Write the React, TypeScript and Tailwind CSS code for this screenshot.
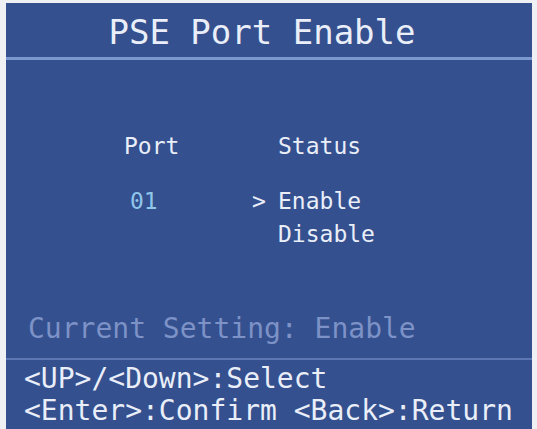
const mono = "font-['DejaVu_Sans_Mono','Liberation_Mono',monospace]";

export default function App() {
  return (
    <div className={`h-[429px] w-[537px] bg-[#eef0f3] pl-[6px] pr-[5px] pt-[3px] ${mono}`}>
      <div className="flex h-full flex-col bg-[#34508f] text-[#e9eef8]">
        {/* title bar */}
        <div className="flex h-[54px] items-center justify-center pt-[4px] pr-[14px] text-[34px] leading-none">
          PSE Port Enable
        </div>
        <div className="h-[3px] bg-[#7d97cf]" />

        {/* port list */}
        <div className="flex flex-1 flex-col">
          <div className="mt-[75px] flex text-[23px] leading-none">
            <div className="w-[272px] pl-[118px]">Port</div>
            <div>Status</div>
          </div>
          <div className="mt-[32px] flex text-[23px] leading-none">
            <div className="w-[246px] pl-[124px] text-[#8fc6ea]">01</div>
            <div className="flex flex-col gap-[10px]">
              <div>
                <span className="inline-block w-[26px]">&gt;</span>Enable
              </div>
              <div className="pl-[26px]">Disable</div>
            </div>
          </div>
          <div className="mt-auto mb-[15px] pl-[22px] text-[28px] leading-none text-[#7d92c6]">
            Current Setting: Enable
          </div>
        </div>

        <div className="h-[2px] bg-[#5c77b3]" />
        {/* key help */}
        <div className="flex h-[69px] flex-col justify-center gap-[4px] pl-[18px] text-[28px] leading-none">
          <div>&lt;UP&gt;/&lt;Down&gt;:Select</div>
          <div>&lt;Enter&gt;:Confirm &lt;Back&gt;:Return</div>
        </div>
      </div>
    </div>
  );
}
